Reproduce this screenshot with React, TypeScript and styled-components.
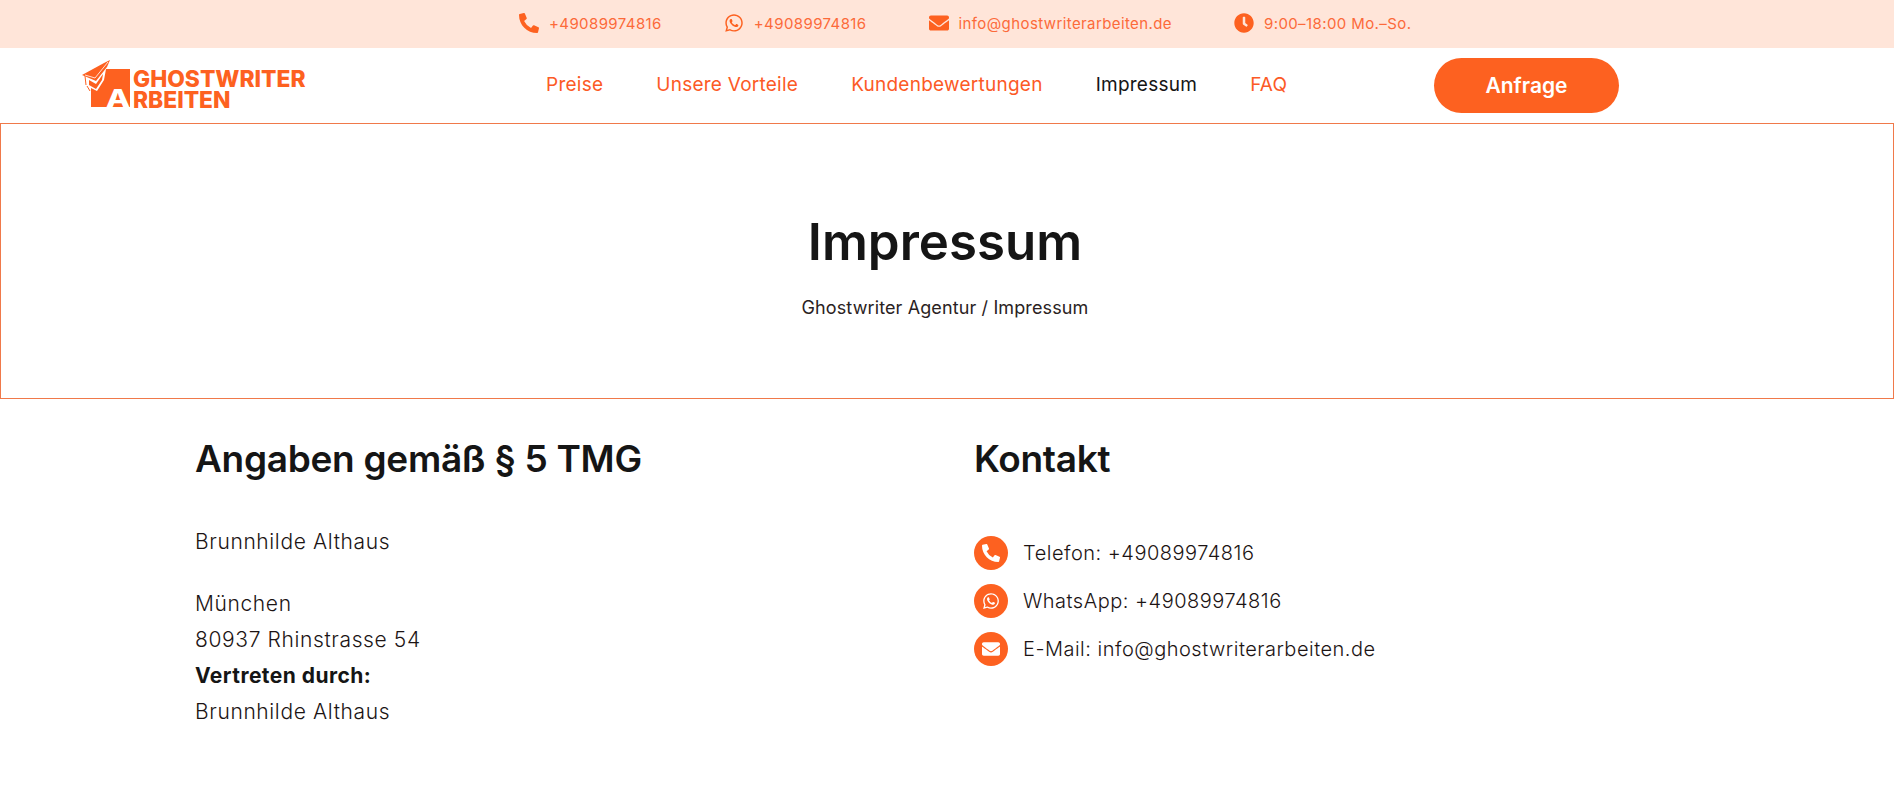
import React from 'react';
import styled, { createGlobalStyle } from 'styled-components';
import { FaPhoneAlt, FaWhatsapp, FaEnvelope, FaClock } from 'react-icons/fa';

const accent = '#fd6120';

const GlobalStyle = createGlobalStyle`
    body {
        margin: 0;
        background: #fff;
        font-family: Inter, "Liberation Sans", sans-serif;
        color: #151515;
    }
`;

const TopBar = styled.div`
    height: 48px;
    box-sizing: border-box;
    padding: 0 0 2px 519px;
    background: #ffe5d9;
    display: flex;
    align-items: center;
    gap: 62px;
`;

const TopItem = styled.div`
    display: flex;
    align-items: center;
    gap: 10px;
    font-size: 15px;
    letter-spacing: 0.4px;
    color: #fc6a3a;

    svg {
        color: ${accent};
        font-size: 20px;
        flex: none;
    }
`;

const Header = styled.header`
    height: 75px;
    display: flex;
    align-items: center;
    padding-left: 82px;
`;

const Logo = styled.div`
    position: relative;
    width: 223px;
    height: 47px;
    margin-bottom: 4px;
    display: flex;
    align-items: flex-end;
    color: ${accent};
    font-weight: 800;
    font-size: 22.800px;
`;

const LogoMark = styled.svg`
    width: 48px;
    height: 47px;
    flex: none;
`;

const LogoLetter = styled.span`
    position: absolute;
    left: 24px;
    bottom: -7px;
    font-size: 25px;
    line-height: 32px;
    font-weight: 800;
    color: #fff;
    transform: scaleX(1.25);
    transform-origin: left center;
`;

const LogoWords = styled.div`
    margin-left: 3px;
    margin-bottom: -3px;
`;

const LogoRow = styled.div`
    height: 21px;
    line-height: 21px;
`;

const Menu = styled.nav`
    display: flex;
    gap: 53px;
    margin: 0 0 2px 241px;
    width: 888px;
    align-items: center;
`;

const MenuLink = styled.a<{ $active?: boolean }>`
    font-size: 19px;
    font-weight: 400;
    letter-spacing: 0.25px;
    color: ${p => (p.$active ? '#151515' : '#fc5a26')};
`;

const RequestButton = styled.button`
    width: 185px;
    height: 55px;
    border: 0;
    border-radius: 28px;
    background: ${accent};
    color: #fff;
    font-family: inherit;
    font-size: 21px;
    font-weight: 600;
`;

const Hero = styled.section`
    height: 276px;
    box-sizing: border-box;
    border: 1px solid #f0794a;
    display: flex;
    flex-direction: column;
    align-items: center;
    padding: 85px 4px 0 0;
`;

const Title = styled.h1`
    margin: 0;
    font-size: 51px;
    line-height: 66px;
    font-weight: 600;
`;

const Crumbs = styled.div`
    margin-top: 21px;
    font-size: 18px;
    line-height: 24px;
    letter-spacing: 0.12px;
    color: #2a2222;
`;

const Content = styled.main`
    display: grid;
    grid-template-columns: 779px 1fr;
    padding: 37px 0 0 195px;
`;

const Heading = styled.h2`
    margin: 0 0 42px;
    font-size: 37px;
    line-height: 46px;
    font-weight: 600;
    letter-spacing: -0.3px;
`;

const Para = styled.p`
    margin: 0 0 26px;
    font-size: 21px;
    line-height: 36px;
    font-weight: 300;
    letter-spacing: 0.62px;
    color: #1c1414;

    strong {
        font-weight: 700;
        letter-spacing: 0.46px;
        color: #151515;
    }
`;

const ContactList = styled.div`
    display: flex;
    flex-direction: column;
    gap: 14px;
    margin-top: 54px;
`;

const ContactRow = styled.div`
    display: flex;
    align-items: center;
    gap: 15px;
    font-size: 20px;
    font-weight: 300;
    letter-spacing: 0.5px;
    color: #1c1414;
`;

const ContactIcon = styled.span`
    width: 34px;
    height: 34px;
    border-radius: 50%;
    background: ${accent};
    color: #fff;
    display: flex;
    align-items: center;
    justify-content: center;
    font-size: 18px;
    flex: none;
`;

const App: React.FC = () => {
    return (
        <>
            <GlobalStyle />
            <TopBar>
                <TopItem><FaPhoneAlt />+49089974816</TopItem>
                <TopItem><FaWhatsapp />+49089974816</TopItem>
                <TopItem><FaEnvelope />info@ghostwriterarbeiten.de</TopItem>
                <TopItem><FaClock />9:00–18:00 Mo.–So.</TopItem>
            </TopBar>
            <Header>
                <Logo>
                    <LogoMark viewBox="0 0 48 47">
                        <path fill={accent} d="M9 47 V28 L15 31 L22 20 L24 9 H48 V47 Z" />
                        <path fill={accent} d="M0 15 L22 3 L28 0 L25 7 L14 21 Z" />
                        <path fill={accent} d="M7 20 L14 24 L21 14 L20 20 L14 29 L7 25 Z" />
                        <path fill="none" stroke="#fff" strokeWidth="0.8" d="M3 15 L13 18 L26 2" />
                        <path fill="none" stroke={accent} strokeWidth="1" d="M3 16 L4 25 M5 26 L8 31" />
                    </LogoMark>
                    <LogoLetter>A</LogoLetter>
                    <LogoWords>
                        <LogoRow>GHOSTWRITER</LogoRow>
                        <LogoRow>RBEITEN</LogoRow>
                    </LogoWords>
                </Logo>
                <Menu>
                    <MenuLink>Preise</MenuLink>
                    <MenuLink>Unsere Vorteile</MenuLink>
                    <MenuLink>Kundenbewertungen</MenuLink>
                    <MenuLink $active>Impressum</MenuLink>
                    <MenuLink>FAQ</MenuLink>
                </Menu>
                <RequestButton>Anfrage</RequestButton>
            </Header>
            <Hero>
                <Title>Impressum</Title>
                <Crumbs>Ghostwriter Agentur / Impressum</Crumbs>
            </Hero>
            <Content>
                <section>
                    <Heading>Angaben gemäß § 5 TMG</Heading>
                    <Para>Brunnhilde Althaus</Para>
                    <Para>
                        München<br />
                        80937 Rhinstrasse 54<br />
                        <strong>Vertreten durch:</strong><br />
                        Brunnhilde Althaus
                    </Para>
                </section>
                <section>
                    <Heading>Kontakt</Heading>
                    <ContactList>
                        <ContactRow><ContactIcon><FaPhoneAlt /></ContactIcon>Telefon: +49089974816</ContactRow>
                        <ContactRow><ContactIcon><FaWhatsapp /></ContactIcon>WhatsApp: +49089974816</ContactRow>
                        <ContactRow><ContactIcon><FaEnvelope /></ContactIcon>E-Mail: info@ghostwriterarbeiten.de</ContactRow>
                    </ContactList>
                </section>
            </Content>
        </>
    );
};

export default App;
